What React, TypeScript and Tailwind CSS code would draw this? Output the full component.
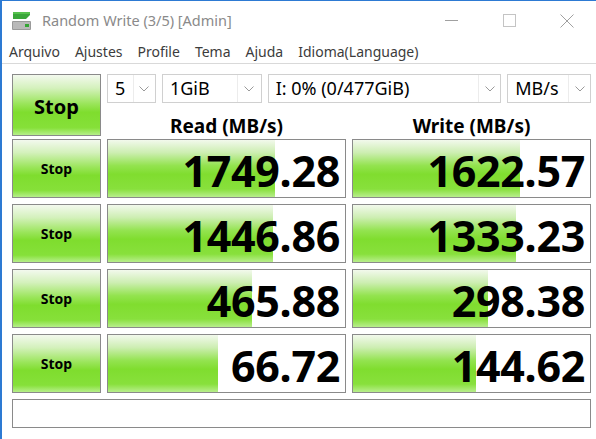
import React from 'react';

const FONT = { fontFamily: '"Noto Sans", "Open Sans", Arial, sans-serif' };

type Row = { read: string; write: string; readBar: number; writeBar: number };

const ROWS: Row[] = [
  { read: '1749.28', write: '1622.57', readBar: 167, writeBar: 167 },
  { read: '1446.86', write: '1333.23', readBar: 165, writeBar: 163 },
  { read: '465.88', write: '298.38', readBar: 144, writeBar: 135 },
  { read: '66.72', write: '144.62', readBar: 110, writeBar: 123 },
];

const MENU = ['Arquivo', 'Ajustes', 'Profile', 'Tema', 'Ajuda', 'Idioma(Language)'];

function Chevron() {
  return (
    <svg width="10" height="6" viewBox="0 0 10 6" className="shrink-0">
      <path d="M0.5 0.5 L5 5 L9.5 0.5" fill="none" stroke="#9a9a9a" strokeWidth="1" />
    </svg>
  );
}

function Combo({ label, width, arrowWidth }: { label: string; width: string; arrowWidth: string }) {
  return (
    <div className={`flex h-[29px] ${width} items-center border border-[#d0d0d0] bg-white`}>
      <span className="flex-1 whitespace-nowrap pl-[7px] text-[18px] leading-[27px] text-black">{label}</span>
      <div className={`flex h-full ${arrowWidth} items-center justify-center border-l border-[#ececec]`}>
        <Chevron />
      </div>
    </div>
  );
}

function StopButton({ big }: { big?: boolean }) {
  return (
    <button
      type="button"
      className={`flex h-full w-full items-center justify-center border border-[#8a8a8a] bg-[linear-gradient(to_bottom,#f3f9ee_0%,#d4f1bc_22%,#9ae55a_48%,#7fdd2e_62%,#86e039_88%,#b6ef8a_100%)] font-bold text-black ${
        big ? 'pt-[4px] text-[20px]' : 'text-[14px]'
      }`}
    >
      Stop
    </button>
  );
}

function ValueCell({ value, bar }: { value: string; bar: number }) {
  return (
    <div className="relative h-full border border-[#8a8a8a] bg-white">
      <div
        className="absolute inset-y-0 left-0 bg-[linear-gradient(to_bottom,#f2f9ec_0%,#cdeeb2_22%,#93e34f_45%,#80dd2f_60%,#88e03c_86%,#b8ee8c_100%)]"
        style={{ width: bar }}
      />
      <div className="relative flex h-full items-center justify-end pr-[5px] pt-[4px] text-[43px] font-bold leading-none tracking-[-0.3px] text-black">
        {value}
      </div>
    </div>
  );
}

export default function App() {
  return (
    <div
      style={FONT}
      className="flex h-[439px] w-[596px] flex-col overflow-hidden border-l-2 border-t border-[#2d7ad3] bg-white"
    >
      {/* Title bar */}
      <div className="flex h-[39px] shrink-0 items-center">
        <svg width="21" height="20" viewBox="0 0 21 20" className="ml-[9px]">
          <path d="M2 1 H19 V4 L15 8 H2 Z" fill="#3aa63a" />
          <path d="M2 1 H19 V3 H2 Z" fill="#56c24e" />
          <rect x="1" y="10" width="19" height="9" rx="1" fill="#9a9a9a" />
          <rect x="2" y="11" width="17" height="7" fill="#b9b9b9" />
          <rect x="14" y="13" width="4" height="3" fill="#35a535" />
        </svg>
        <span className="ml-[10px] text-[14.5px] text-[#8a8a8a]">Random Write (3/5) [Admin]</span>
        <div className="ml-auto flex h-full items-center">
          <div className="flex h-full w-[58px] items-center justify-center">
            <div className="h-px w-[13px] bg-[#a0a0a0]" />
          </div>
          <div className="flex h-full w-[58px] items-center justify-center">
            <div className="h-[13px] w-[13px] border border-[#c4c4c4]" />
          </div>
          <div className="flex h-full w-[58px] items-center justify-center">
            <svg width="14" height="14" viewBox="0 0 14 14">
              <path d="M0.5 0.5 L13.5 13.5 M13.5 0.5 L0.5 13.5" stroke="#a0a0a0" strokeWidth="1" />
            </svg>
          </div>
        </div>
      </div>

      {/* Menu */}
      <div className="flex h-[24px] shrink-0 items-center gap-[15px] border-b border-[#d9d9d9] pl-[7px] text-[14px] text-[#3c3c3c]">
        {MENU.map((m) => (
          <span key={m}>{m}</span>
        ))}
      </div>

      {/* Main */}
      <div className="flex flex-1 flex-col gap-[6px] pl-[10px] pr-[5px] pt-[10px]">
        <div className="grid h-[59px] grid-cols-[89px_239px_239px] gap-x-[6px]">
          <StopButton big />
          <div className="col-span-2 flex flex-col">
            <div className="flex gap-[6px]">
              <Combo label="5" width="w-[49px]" arrowWidth="w-[22px]" />
              <Combo label="1GiB" width="w-[100px]" arrowWidth="w-[24px]" />
              <Combo label="I: 0% (0/477GiB)" width="w-[234px]" arrowWidth="w-[22px]" />
              <Combo label="MB/s" width="w-[84px]" arrowWidth="w-[22px]" />
            </div>
            <div className="grid flex-1 grid-cols-2 gap-x-[6px] pt-[14px] text-[19px] font-bold leading-none text-black">
              <div className="flex justify-center">Read (MB/s)</div>
              <div className="flex justify-center">Write (MB/s)</div>
            </div>
          </div>
        </div>

        {ROWS.map((r, i) => (
          <div key={i} className="grid h-[59px] grid-cols-[89px_239px_239px] gap-x-[6px]">
            <StopButton />
            <ValueCell value={r.read} bar={r.readBar} />
            <ValueCell value={r.write} bar={r.writeBar} />
          </div>
        ))}

        <div className="h-[29px] w-[579px] border border-[#8a8a8a] bg-white" />
      </div>
    </div>
  );
}
